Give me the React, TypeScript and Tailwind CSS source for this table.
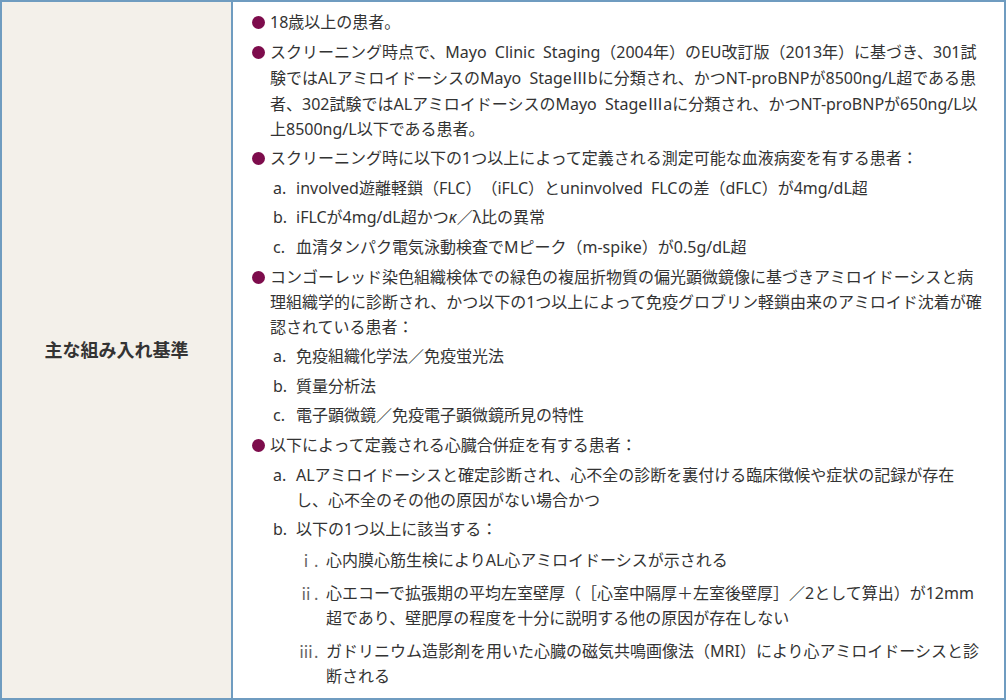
import type { ReactNode } from 'react';

// full-width roman numeral, as in the source text
const R = ({ children }: { children: string }) => (
  <span className="inline-block w-[16px] text-center font-['Noto_Sans_CJK_JP',sans-serif]">{children}</span>
);

const Bullet = ({ children }: { children: ReactNode }) => (
  <li className="flex">
    <span className="mt-[6px] mr-[5px] h-[13px] w-[13px] shrink-0 rounded-full bg-[#7d0c4c]" />
    <div className="flex-1">{children}</div>
  </li>
);

const Sub = ({ label, children }: { label: string; children: ReactNode }) => (
  <li className="flex">
    <span className="w-[23px] shrink-0">{label}</span>
    <div className="flex-1">{children}</div>
  </li>
);

const Roman = ({ label, children }: { label: string; children: ReactNode }) => (
  <li className="flex">
    <span className="w-[30px] shrink-0 pl-[2px] font-['Noto_Sans_CJK_JP',sans-serif] text-[#666]">{label}</span>
    <div className="flex-1">{children}</div>
  </li>
);

export default function App() {
  return (
    <main className="flex h-[700px] w-[1006px] border-2 border-[#6f9cc0] bg-white font-['Noto_Sans','Noto_Sans_CJK_JP',sans-serif] text-[#333]">
      <section className="flex w-[231px] shrink-0 items-center justify-center border-r-2 border-[#6f9cc0] bg-[#f3f0ea]">
        <h2 className="text-[18px] font-bold text-[#333]">主な組み入れ基準</h2>
      </section>
      <section className="flex-1 px-[19px] pt-[8px] text-[16px] leading-[25px] [word-spacing:4px] [text-spacing-trim:space-all]">
        <ul className="space-y-[4.6px]">
          <Bullet>18歳以上の患者。</Bullet>
          <Bullet>
            スクリーニング時点で、Mayo Clinic Staging（2004年）のEU改訂版（2013年）に基づき、301試験ではALアミロイドーシスのMayo Stage<R>Ⅲ</R>bに分類され、かつNT-proBNPが8500ng/L超である患者、302試験ではALアミロイドーシスのMayo Stage<R>Ⅲ</R>aに分類され、かつNT-proBNPが650ng/L以上8500ng/L以下である患者。
          </Bullet>
          <Bullet>
            スクリーニング時に以下の1つ以上によって定義される測定可能な血液病変を有する患者：
            <ol className="mt-[4.6px] space-y-[4.6px] pl-[3px]">
              <Sub label="a.">involved遊離軽鎖（FLC）（iFLC）とuninvolved FLCの差（dFLC）が4mg/dL超</Sub>
              <Sub label="b.">
                iFLCが4mg/dL超かつ<i>κ</i>／λ比の異常
              </Sub>
              <Sub label="c.">血清タンパク電気泳動検査でMピーク（m-spike）が0.5g/dL超</Sub>
            </ol>
          </Bullet>
          <Bullet>
            コンゴーレッド染色組織検体での緑色の複屈折物質の偏光顕微鏡像に基づきアミロイドーシスと病理組織学的に診断され、かつ以下の1つ以上によって免疫グロブリン軽鎖由来のアミロイド沈着が確認されている患者：
            <ol className="mt-[4.6px] space-y-[4.6px] pl-[3px]">
              <Sub label="a.">免疫組織化学法／免疫蛍光法</Sub>
              <Sub label="b.">質量分析法</Sub>
              <Sub label="c.">電子顕微鏡／免疫電子顕微鏡所見の特性</Sub>
            </ol>
          </Bullet>
          <Bullet>
            以下によって定義される心臓合併症を有する患者：
            <ol className="mt-[4.6px] space-y-[4.6px] pl-[3px]">
              <Sub label="a.">
                ALアミロイドーシスと確定診断され、心不全の診断を裏付ける臨床徴候や症状の記録が存在し、心不全のその他の原因がない場合かつ
              </Sub>
              <Sub label="b.">
                以下の1つ以上に該当する：
                <ol className="mt-[6px] space-y-[8px]">
                  <Roman label="ⅰ.">心内膜心筋生検によりAL心アミロイドーシスが示される</Roman>
                  <Roman label="ⅱ.">
                    心エコーで拡張期の平均左室壁厚（［心室中隔厚＋左室後壁厚］／2として算出）が12mm超であり、壁肥厚の程度を十分に説明する他の原因が存在しない
                  </Roman>
                  <Roman label="ⅲ.">
                    ガドリニウム造影剤を用いた心臓の磁気共鳴画像法（MRI）により心アミロイドーシスと診断される
                  </Roman>
                </ol>
              </Sub>
            </ol>
          </Bullet>
        </ul>
      </section>
    </main>
  );
}
